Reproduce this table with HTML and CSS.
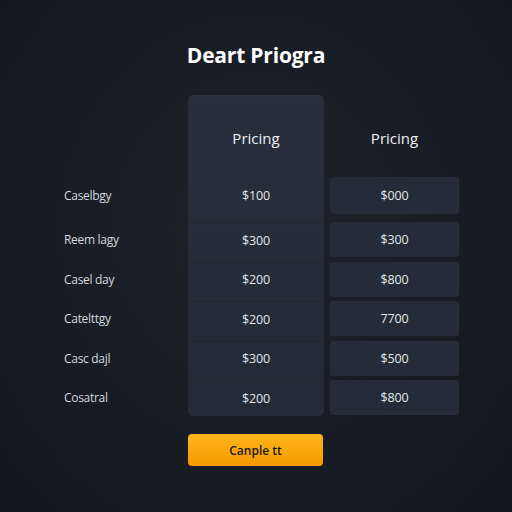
FILE: index.html
```html
<!DOCTYPE html>
<html>
<head>
<meta charset="utf-8">
<link rel="stylesheet" href="styles.css">
</head>
<body>
<div class="page">
  <h1 class="title">Deart Priogra</h1>
  <div class="table">
    <div class="labels">
      <div class="label first">Caselbgy</div>
      <div class="label">Reem lagy</div>
      <div class="label">Casel day</div>
      <div class="label">Catelttgy</div>
      <div class="label">Casc dajl</div>
      <div class="label">Cosatral</div>
    </div>
    <div class="col featured">
      <div class="head">Pricing</div>
      <div class="cell first">$100</div>
      <div class="cell">$300</div>
      <div class="cell">$200</div>
      <div class="cell">$200</div>
      <div class="cell">$300</div>
      <div class="cell last">$200</div>
    </div>
    <div class="col plain">
      <div class="head">Pricing</div>
      <div class="cell first">$000</div>
      <div class="cell">$300</div>
      <div class="cell">$800</div>
      <div class="cell">7700</div>
      <div class="cell">$500</div>
      <div class="cell">$800</div>
    </div>
  </div>
  <div class="actions">
    <button class="btn">Canple tt</button>
  </div>
</div>
</body>
</html>
```
FILE: styles.css
```css
html, body {
  margin: 0;
  padding: 0;
}
body {
  width: 512px;
  height: 512px;
  overflow: hidden;
  background: radial-gradient(ellipse at 50% 45%, #1c222b 0%, #181d25 55%, #12161c 100%);
  font-family: "Open Sans", "Noto Sans", sans-serif;
  color: #e6e9ee;
}
.page {
  padding-top: 40px;
}
.title {
  margin: 0;
  text-align: center;
  font-size: 21px;
  line-height: 30px;
  font-weight: 700;
  color: #ffffff;
  letter-spacing: -0.2px;
}
.table {
  display: flex;
  align-items: flex-start;
  margin-top: 25px;
  padding-left: 64px;
}
.labels {
  width: 124px;
  padding-top: 82px;
  display: flex;
  flex-direction: column;
  gap: 4.5px;
}
.label {
  height: 35px;
  display: flex;
  align-items: center;
  font-size: 12px;
  color: #d4d8de;
  letter-spacing: -0.3px;
}
.label.first {
  height: 37px;
  margin-bottom: 3.5px;
}
.col {
  display: flex;
  flex-direction: column;
  gap: 4.5px;
}
.featured {
  width: 136px;
  background: linear-gradient(180deg, #262f3b 0%, #222b37 100%);
  border-radius: 5px;
  gap: 0;
}
.plain {
  width: 129px;
  margin-left: 6px;
}
.head {
  height: 82px;
  display: flex;
  align-items: center;
  justify-content: center;
  font-size: 15px;
  font-weight: 500;
  color: #eef1f4;
  padding-top: 4px;
  box-sizing: border-box;
}
.plain .head {
  height: 77.5px;
  padding-top: 8px;
}
.cell {
  height: 35px;
  display: flex;
  align-items: center;
  justify-content: center;
  font-size: 12.5px;
  color: #e4e7ec;
  letter-spacing: -0.2px;
}
.cell.first {
  height: 37px;
  margin-bottom: 3.5px;
}
.plain .cell {
  background: #232c38;
  border-radius: 3px;
}
.featured .cell {
  height: 39.5px;
  padding-bottom: 4.5px;
  border-top: 1px solid #1f2731;
  box-sizing: border-box;
}
.featured .cell.first {
  height: 45px;
  border-top: none;
  padding-bottom: 8px;
  margin-bottom: 0;
}
.featured .cell.last {
  height: 36px;
  padding-bottom: 0;
}
.actions {
  padding-left: 188px;
  margin-top: 18px;
}
.btn {
  width: 135px;
  height: 32px;
  border: none;
  border-radius: 4px;
  background: linear-gradient(180deg, #ffb41c 0%, #f59a00 100%);
  color: #1a1a1a;
  font-family: "Open Sans", "Noto Sans", sans-serif;
  font-size: 12px;
  font-weight: 600;
  padding: 0;
}
```
